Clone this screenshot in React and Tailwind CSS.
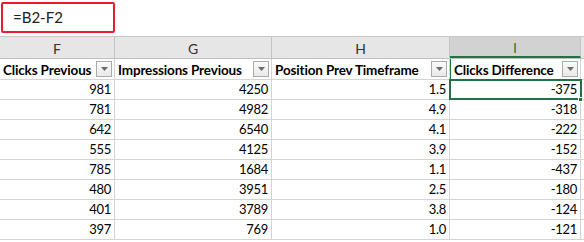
const COLS = [
  { letter: 'F', title: 'Clicks Previous', w: 'w-[115px]' },
  { letter: 'G', title: 'Impressions Previous', w: 'w-[157px]' },
  { letter: 'H', title: 'Position Prev Timeframe', w: 'w-[178px]' },
  { letter: 'I', title: 'Clicks Difference', w: 'w-[131px]' },
]

const ROWS = [
  ['981', '4250', '1.5', '-375'],
  ['781', '4982', '4.9', '-318'],
  ['642', '6540', '4.1', '-222'],
  ['555', '4125', '3.9', '-152'],
  ['785', '1684', '1.1', '-437'],
  ['480', '3951', '2.5', '-180'],
  ['401', '3789', '3.8', '-124'],
  ['397', '769', '1.0', '-121'],
]

function FilterButton() {
  return (
    <span className="absolute right-[2px] top-[2px] w-[16px] h-[16px] border border-[#ababab] bg-gradient-to-b from-[#fbfbfb] to-[#e9e9e9] flex items-center justify-center">
      <svg width="7" height="4" viewBox="0 0 7 4">
        <path d="M0 0h7L3.5 4z" fill="#6b6b6b" />
      </svg>
    </span>
  )
}

export default function App() {
  return (
    <div className="w-[584px] h-[242px] overflow-hidden bg-white text-[#000] font-['Lato','Liberation_Sans',sans-serif] text-[13px]">
      {/* formula bar */}
      <div className="h-[37px] border-b border-[#c8c8c8] pt-[2px] pl-[1px]">
        <div className="w-[114px] h-[31px] border-2 border-[#e5202a] rounded-[2px] flex items-center pl-[10px] text-[15px] text-[#222]">
          =B2-F2
        </div>
      </div>

      {/* column letters */}
      <div className="flex h-[22px] bg-[#e6e6e6] border-b border-[#c0c0c0]">
        {COLS.map((c) => (
          <div
            key={c.letter}
            className={`${c.w} shrink-0 border-r border-[#c4c4c4] flex items-center justify-center pt-[2px] text-[14px] ${
              c.letter === 'I' ? 'bg-[#d2d2d2] text-[#217346] border-b-2 border-b-[#217346]' : 'text-[#333]'
            }`}
          >
            {c.letter}
          </div>
        ))}
        <div className="flex-1" />
      </div>

      {/* header row */}
      <div className="flex h-[21px] border-b border-[#d4d4d4] font-bold text-[13.5px] tracking-[-0.15px]">
        {COLS.map((c) => (
          <div
            key={c.title}
            className={`${c.w} shrink-0 relative border-r border-[#d4d4d4] pl-[3px] pt-[2px] flex items-center whitespace-nowrap overflow-hidden ${
              c.letter === 'I' ? 'border-l border-l-[#217346]' : ''
            }`}
          >
            {c.title}
            <FilterButton />
          </div>
        ))}
        <div className="flex-1 pl-[3px] pt-[2px] whitespace-nowrap overflow-hidden text-[#7a2a14]">Impressions</div>
      </div>

      {/* data rows */}
      {ROWS.map((r, i) => (
        <div key={i} className="flex h-[20px] border-b border-[#d4d4d4] text-[13px] tracking-[-0.3px]">
          {r.map((v, j) => (
            <div
              key={j}
              className={`${COLS[j].w} shrink-0 relative border-r border-[#d4d4d4] pr-[3px] pt-[1px] flex items-center justify-end ${
                i === 0 && j === 3 ? 'outline-2 outline-[#217346] -outline-offset-1 z-10' : ''
              }`}
            >
              {v}
              {i === 0 && j === 3 && (
                <span className="absolute -right-[3px] -bottom-[3px] w-[5px] h-[5px] bg-[#217346] border border-white" />
              )}
            </div>
          ))}
          <div className="flex-1" />
        </div>
      ))}
    </div>
  )
}
